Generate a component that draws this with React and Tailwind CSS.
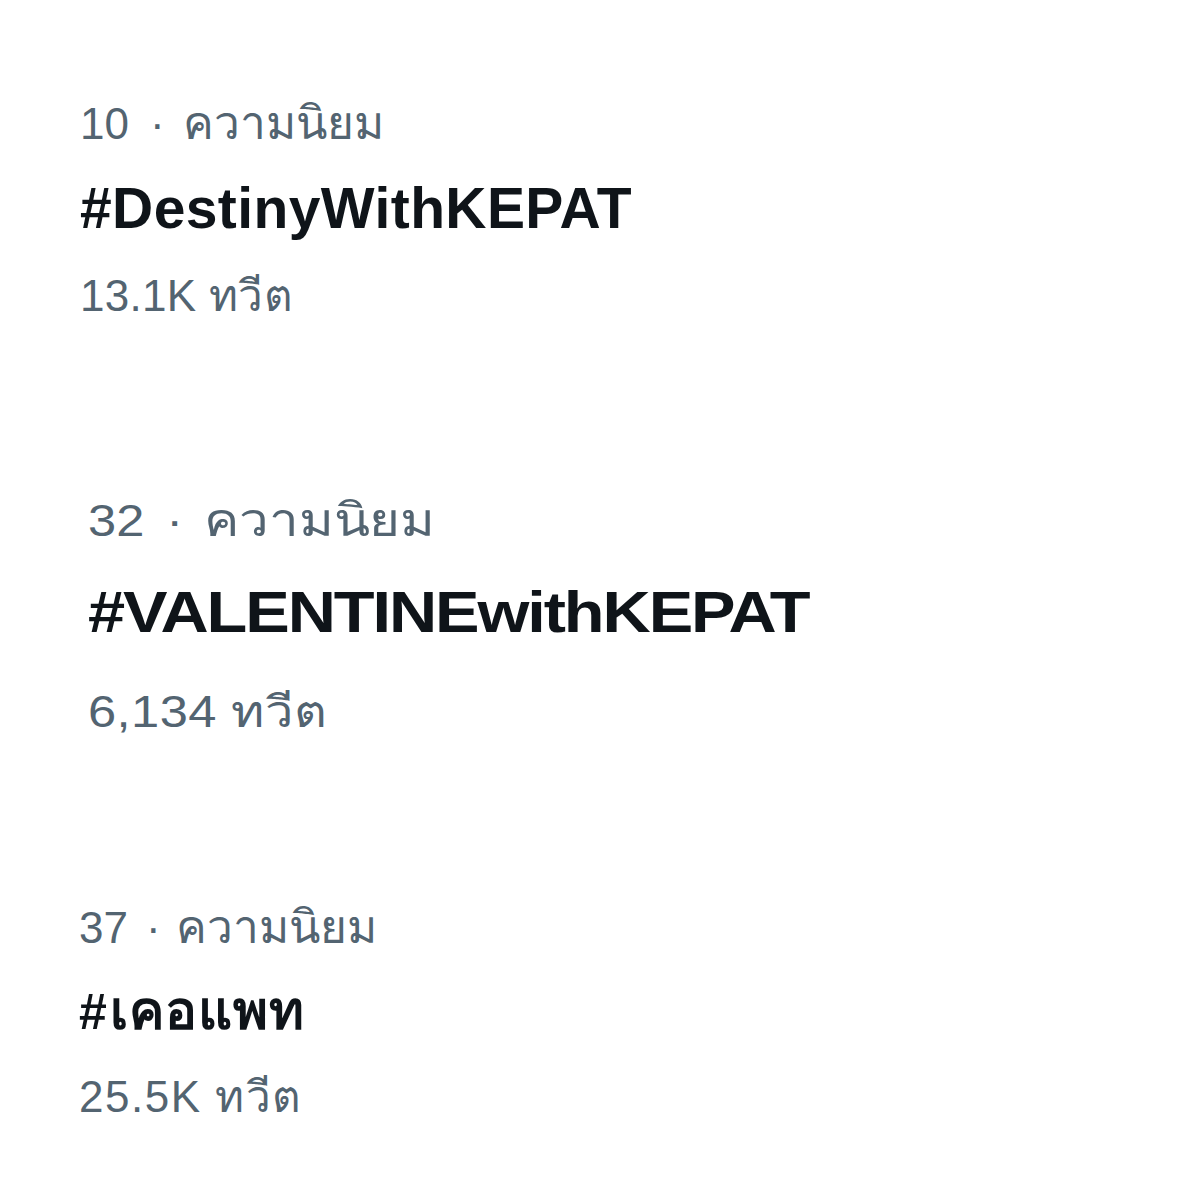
import React from 'react';

const trends = [
  {
    rank: '10',
    tag: '#',
    tagRest: 'DestinyWithKEPAT',
    count: '13.1K ทวีต',
    box: 'pl-[80px] pt-[101px]',
    stretch: '',
    dotGap: 'ml-[21px]',
    thaiGap: 'ml-[18px]',
    title: 'mt-[33px] text-[57px] leading-[58px] tracking-[0.4px]',
    rest: '',
    countGap: 'mt-[37px] tracking-[0.3px]',
  },
  {
    rank: '32',
    tag: '#',
    tagRest: 'VALENTINEwithKEPAT',
    count: '6,134 ทวีต',
    box: 'pl-[88px] pt-[180px]',
    stretch: 'origin-left scale-x-[1.15]',
    dotGap: 'ml-[19px]',
    thaiGap: 'ml-[18px]',
    title: 'mt-[40px] text-[58px] leading-[58px] tracking-[-1.8px]',
    rest: '',
    countGap: 'mt-[49px] tracking-[0.4px]',
  },
  {
    rank: '37',
    tag: '#',
    tagRest: 'เคอแพท',
    count: '25.5K ทวีต',
    box: 'pl-[79px] pt-[171px]',
    stretch: '',
    dotGap: 'ml-[18px]',
    thaiGap: 'ml-[15px]',
    title: 'mt-[36px] text-[50px] leading-[50px]',
    rest: 'ml-[3px] text-[53px] tracking-[1px]',
    countGap: 'mt-[38px] tracking-[1.5px]',
  },
];

const TrendItem = ({ item }) => {
  return (
    <div className={`flex flex-col items-start ${item.box}`}>
      <div className={`flex flex-col items-start ${item.stretch}`}>
        <div className="flex items-baseline text-[44px] leading-[44px] text-[#536471]">
          <span>{item.rank}</span>
          <span className={item.dotGap}>·</span>
          <span className={`text-[46px] ${item.thaiGap}`}>ความนิยม</span>
        </div>
        <div className={`flex items-baseline font-bold text-[#0f1419] ${item.title}`}>
          <span>{item.tag}</span>
          <span className={item.rest}>{item.tagRest}</span>
        </div>
        <div className={`text-[44px] leading-[44px] text-[#536471] ${item.countGap}`}>
          {item.count}
        </div>
      </div>
    </div>
  );
};

const App = () => {
  return (
    <div
      className="w-[1200px] h-[1200px] bg-white overflow-hidden"
      style={{ fontFamily: '"Liberation Sans", "Noto Sans", sans-serif' }}
    >
      {trends.map((t) => (
        <TrendItem key={t.rank} item={t} />
      ))}
    </div>
  );
};

export default App;
